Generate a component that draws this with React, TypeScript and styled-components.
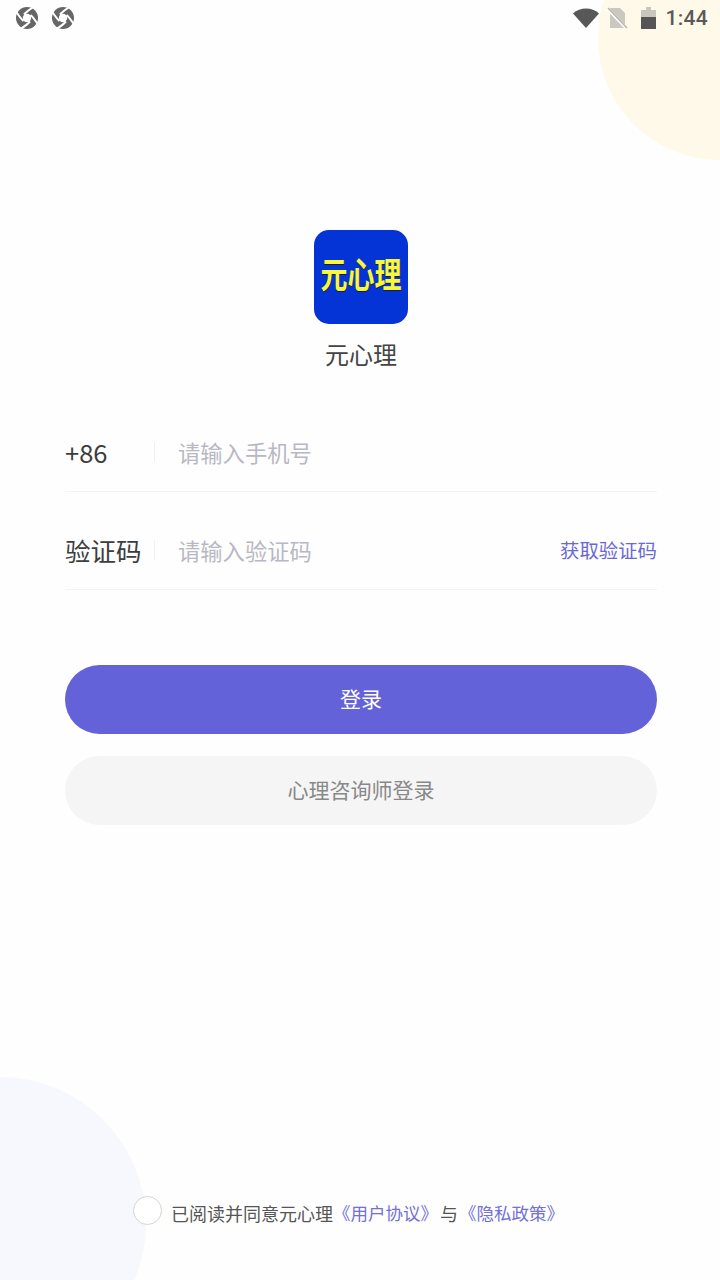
import React from 'react'
import styled, { createGlobalStyle } from 'styled-components'

const GlobalStyle = createGlobalStyle`
  html, body {
    margin: 0;
    padding: 0;
    background: #fff;
  }
  * {
    box-sizing: border-box;
  }
`

const Page = styled.div`
  position: relative;
  width: 720px;
  height: 1280px;
  overflow: hidden;
  display: flex;
  flex-direction: column;
  background: #fefefe;
  font-family: "Noto Sans CJK SC", "Noto Sans", sans-serif;
`

const CornerCircle = styled.div`
  position: absolute;
  top: -84px;
  right: -122px;
  width: 244px;
  height: 244px;
  border-radius: 50%;
  background: #fef9e8;
`

const BottomCircle = styled.div`
  position: absolute;
  left: -146px;
  bottom: -89px;
  width: 292px;
  height: 292px;
  border-radius: 50%;
  background: #f7f7fe;
`

const StatusBar = styled.div`
  position: relative;
  height: 36px;
  display: flex;
  align-items: center;
  justify-content: space-between;
  padding: 0 12px 0 15px;
`

const StatusGroup = styled.div<{ $gap: number }>`
  display: flex;
  align-items: center;
  gap: ${(p) => p.$gap}px;
`

const Clock = styled.span`
  font-family: Roboto, sans-serif;
  font-weight: 500;
  font-size: 21px;
  letter-spacing: 0.3px;
  color: #5a5a5a;
  margin-left: -4px;
`

const Main = styled.main`
  position: relative;
  flex: 1;
  display: flex;
  flex-direction: column;
  padding: 194px 63px 0 65px;
`

const Brand = styled.div`
  display: flex;
  flex-direction: column;
  align-items: center;
  margin-bottom: 22px;
`

const Logo = styled.div`
  width: 94px;
  height: 94px;
  border-radius: 15px;
  background: #0433d6;
  display: flex;
  align-items: center;
  justify-content: center;
  color: #f7f73c;
  font-weight: 700;
  font-size: 27px;
  line-height: 1;
  white-space: nowrap;
  text-shadow: 0.6px 0.6px 0 #1a1a40;
`

const LogoText = styled.span`
  display: block;
  margin-bottom: 8px;
  transform: scaleY(1.3);
`

const BrandName = styled.div`
  margin-top: 12px;
  font-size: 24px;
  line-height: 36px;
  color: #444;
`

const Row = styled.div`
  height: 98px;
  display: flex;
  align-items: center;
  border-bottom: 1px solid #f3f3f5;
  padding-top: 18px;
`

const Label = styled.span`
  width: 89px;
  font-size: 25.5px;
  line-height: 34px;
  color: #3d3d3d;
  white-space: nowrap;
`

const Divider = styled.span`
  width: 1px;
  height: 20px;
  background: #f1f1f3;
  margin-right: 23px;
`

const Placeholder = styled.span`
  flex: 1;
  font-size: 22.3px;
  line-height: 32px;
  color: #b8b8c4;
`

const CodeLink = styled.span`
  font-size: 19.4px;
  line-height: 30px;
  color: #6a68d4;
`

const Button = styled.div<{ $primary?: boolean }>`
  height: 69px;
  border-radius: 35px;
  display: flex;
  align-items: center;
  justify-content: center;
  padding-bottom: 3px;
  font-size: 21px;
  background: ${(p) => (p.$primary ? '#6362d9' : '#f5f5f5')};
  color: ${(p) => (p.$primary ? '#fff' : '#888')};
`

const Buttons = styled.div`
  display: flex;
  flex-direction: column;
  gap: 22px;
  margin-top: 75px;
`

const Agreement = styled.div`
  position: relative;
  height: 70px;
  margin-bottom: 32px;
  display: flex;
  align-items: center;
  padding-left: 133px;
  font-size: 18px;
  line-height: 28px;
  color: #555;
  white-space: nowrap;
`

const Check = styled.span`
  width: 29px;
  height: 29px;
  border-radius: 50%;
  border: 1px solid #d4d4d8;
  background: #fff;
  margin: -6px 9px 0 0;
`

const AgreementText = styled.span`
  display: flex;
  align-items: center;
`

const Policy = styled.span`
  font-size: 17.5px;
  color: #7270d6;
`

const Joiner = styled.span`
  margin: 0 1px 0 2px;
`

const PinwheelIcon = () => (
  <svg width="24" height="24" viewBox="0 0 24 24">
    <circle cx="12" cy="12" r="11" fill="#666" />
    <circle cx="12" cy="12" r="4.2" fill="#fff" />
    {[0, 90, 180, 270].map((deg) => (
      <path
        key={deg}
        d="M9 8.5C11.5 5.5 15 3.2 20 0"
        fill="none"
        stroke="#fff"
        strokeWidth="2"
        transform={`rotate(${deg} 12 12)`}
      />
    ))}
  </svg>
)

const WifiIcon = () => (
  <svg width="26" height="20" viewBox="0 0 26 20">
    <path d="M0 5.5C7-1.3 19-1.3 26 5.5L13 20Z" fill="#585858" />
  </svg>
)

const SimIcon = () => (
  <svg width="22" height="22" viewBox="0 0 22 22">
    <path d="M4 1h10l5 5v15H4Z" fill="#cbc9bf" />
    <path d="M1 1l19 20" stroke="#fff" strokeWidth="3" />
    <path d="M2 1l19 20" stroke="#b9b7ae" strokeWidth="1.6" />
  </svg>
)

const BatteryIcon = () => (
  <svg width="15" height="22" viewBox="0 0 15 22">
    <path d="M5 0h5v3h5v19H0V3h5Z" fill="#c9c6bb" />
    <path d="M0 10h15v12H0Z" fill="#555" />
  </svg>
)

export default function App() {
  return (
    <>
      <GlobalStyle />
      <Page>
        <CornerCircle />
        <BottomCircle />
        <StatusBar>
          <StatusGroup $gap={12}>
            <PinwheelIcon />
            <PinwheelIcon />
          </StatusGroup>
          <StatusGroup $gap={13}>
            <StatusGroup $gap={7}>
              <WifiIcon />
              <SimIcon />
            </StatusGroup>
            <BatteryIcon />
            <Clock>1:44</Clock>
          </StatusGroup>
        </StatusBar>
        <Main>
          <Brand>
            <Logo>
              <LogoText>元心理</LogoText>
            </Logo>
            <BrandName>元心理</BrandName>
          </Brand>
          <Row>
            <Label>+86</Label>
            <Divider />
            <Placeholder>请输入手机号</Placeholder>
          </Row>
          <Row>
            <Label>验证码</Label>
            <Divider />
            <Placeholder>请输入验证码</Placeholder>
            <CodeLink>获取验证码</CodeLink>
          </Row>
          <Buttons>
            <Button $primary>登录</Button>
            <Button>心理咨询师登录</Button>
          </Buttons>
        </Main>
        <Agreement>
          <Check />
          <AgreementText>
            已阅读并同意元心理<Policy>《用户协议》</Policy>
            <Joiner>与</Joiner>
            <Policy>《隐私政策》</Policy>
          </AgreementText>
        </Agreement>
      </Page>
    </>
  )
}
